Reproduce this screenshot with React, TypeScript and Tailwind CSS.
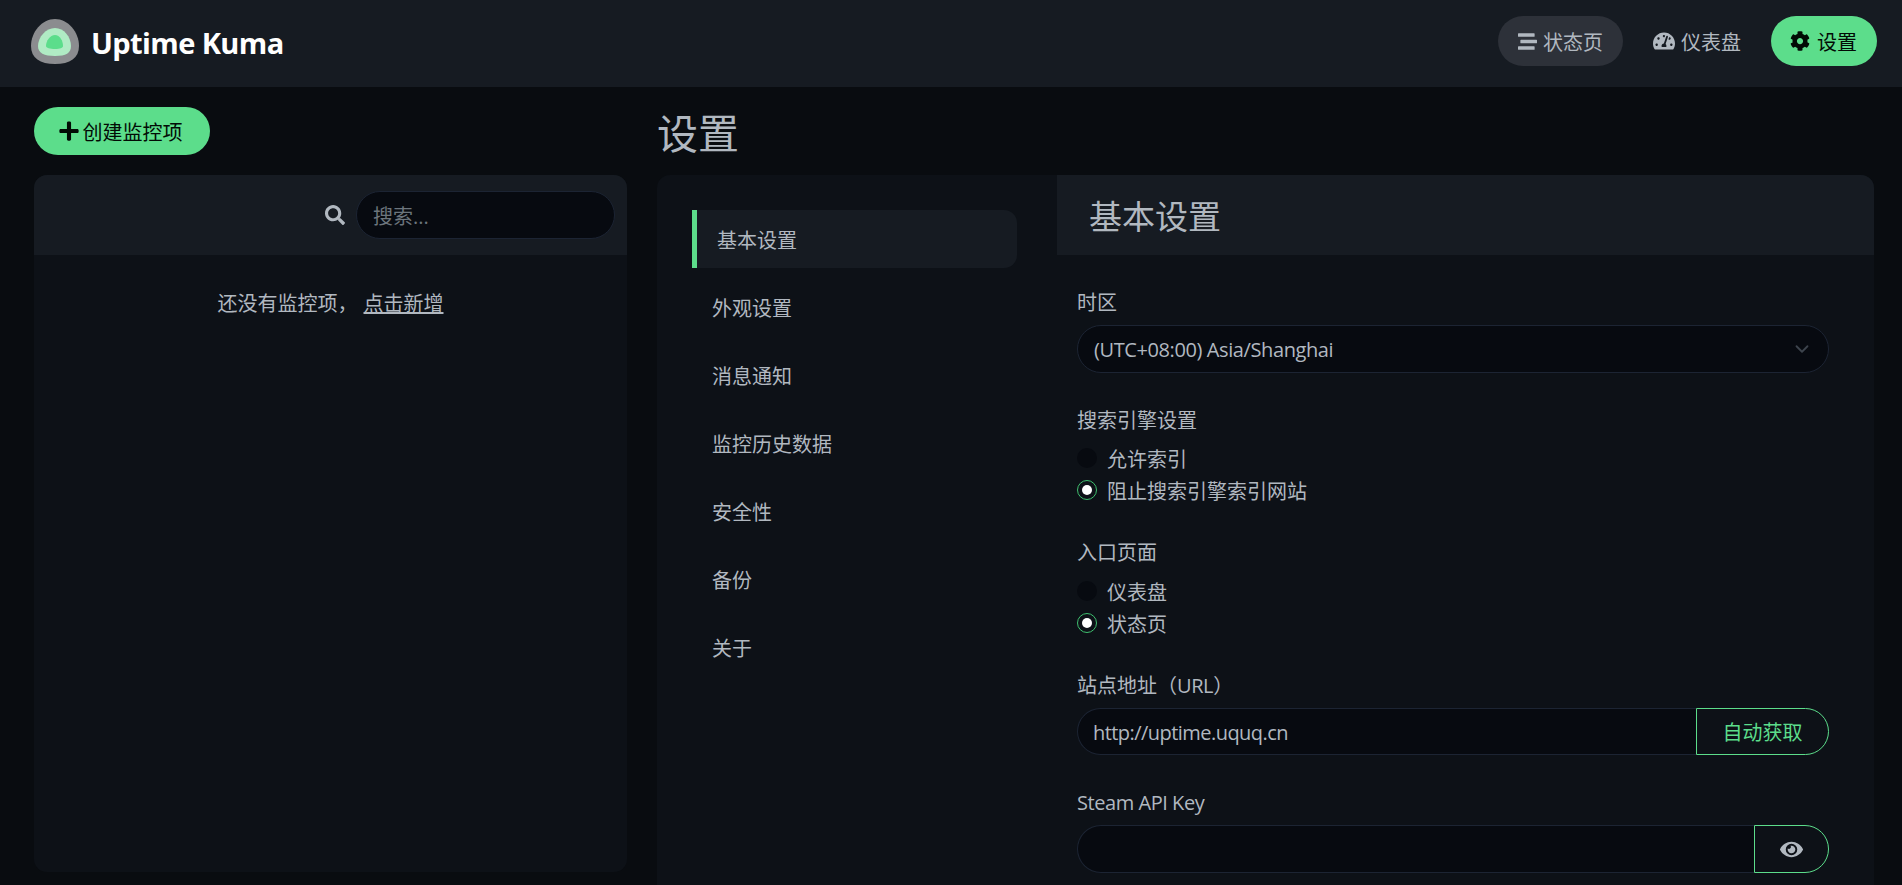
import React from "react";
import { FaCog, FaEye, FaPlus, FaSearch, FaStream, FaTachometerAlt } from "react-icons/fa";
import { ChevronDown } from "lucide-react";

const font = "font-['Open_Sans','Noto_Sans_CJK_SC',sans-serif]";

const menuItems = ["外观设置", "消息通知", "监控历史数据", "安全性", "备份", "关于"];

const Logo = () => (
  <svg width="48" height="45" viewBox="0 0 48 45">
    <path
      d="M24 0C37 0 48 13 48 27C48 39 39 45 24 45C9 45 0 39 0 27C0 13 11 0 24 0Z"
      fill="#8b8c8f"
    />
    <path
      d="M24 9C33 9 40 18 40 27C40 34 35 37 24 37C13 37 7 34 7 27C7 18 15 9 24 9Z"
      fill="#b0ebc4"
    />
    <path
      d="M24 16C29 16 32 22 32 27C32 29 29 30 24 30C19 30 15 29 15 27C15 22 19 16 24 16Z"
      fill="#5cdd8b"
    />
  </svg>
);

const Radio = ({ label, checked }: { label: string; checked?: boolean }) => (
  <div className="flex h-[32px] items-center gap-[10px]">
    {checked ? (
      <span className="flex h-[20px] w-[20px] items-center justify-center rounded-full border border-[#3fbf6f] bg-[#0d1117]">
        <span className="h-[10px] w-[10px] rounded-full bg-white" />
      </span>
    ) : (
      <span className="h-[20px] w-[20px] rounded-full bg-[#070a10]" />
    )}
    <span className="pt-[4px]">{label}</span>
  </div>
);

const Label = ({ children }: { children: React.ReactNode }) => (
  <div className="flex h-[30px] items-center pt-[4px]">{children}</div>
);

const App = () => {
  return (
    <div className={`${font} flex h-screen flex-col overflow-hidden bg-[#090c10] text-[20px] text-[#b1b8c0]`}>
      <header className="flex h-[87px] shrink-0 items-center bg-[#161b22] pb-[5px] pl-[31px] pr-[25px]">
        <Logo />
        <span className="ml-[12px] pt-[3px] text-[29px] font-bold tracking-[-0.6px] text-white">Uptime Kuma</span>
        <nav className="ml-auto flex items-center gap-[10px]">
          <a className="flex h-[50px] items-center gap-[6px] rounded-full bg-[#2d3139] px-[20px]">
            <FaStream className="text-[19px]" />
            <span className="pt-[4px]">状态页</span>
          </a>
          <a className="flex h-[50px] items-center gap-[6px] rounded-full px-[20px]">
            <FaTachometerAlt className="text-[22px]" />
            <span className="pt-[4px]">仪表盘</span>
          </a>
          <a className="flex h-[50px] items-center gap-[7px] rounded-full bg-[#5cdd8b] pl-[19px] pr-[20px] text-[#020b05]">
            <FaCog className="text-[20px]" />
            <span className="pt-[4px]">设置</span>
          </a>
        </nav>
      </header>

      <main className="flex min-h-0 flex-1 gap-[30px] pl-[34px] pr-[28px]">
        <div className="w-[593px] shrink-0 pt-[20px]">
          <button className="flex h-[48px] w-[176px] items-center justify-center gap-[3px] rounded-full bg-[#5cdd8b] pr-[4px] text-[#020b05]">
            <FaPlus className="text-[22px]" />
            <span className="pt-[4px]">创建监控项</span>
          </button>
          <div className="mt-[20px] h-[697px] overflow-hidden rounded-[13px] bg-[#0d1117]">
            <div className="flex h-[80px] items-center justify-end gap-[11px] bg-[#161b22] pr-[12px]">
              <FaSearch className="text-[#b1b8c0]" />
              <div className="flex h-[48px] w-[259px] items-center rounded-full border border-[#1c2433] bg-[#070a10] px-[16px] pt-[4px] text-[#6c757d]">
                搜索...
              </div>
            </div>
            <div className="mt-[34px] text-center leading-[30px]">
              还没有监控项，
              <a className="ml-[6px] underline">点击新增</a>
            </div>
          </div>
        </div>

        <div className="min-w-0 flex-1">
          <h1 className="flex h-[88px] items-center pt-[4px] text-[41px] leading-none">设置</h1>
          <div className="flex h-[800px] overflow-hidden rounded-[13px] bg-[#0d1117]">
            <div className="w-[400px] shrink-0 pl-[35px] pr-[40px] pt-[35px]">
              <div className="flex h-[58px] items-center rounded-r-[13px] border-l-[5px] border-[#5cdd8b] bg-[#161b22] pl-[20px] pt-[4px]">
                基本设置
              </div>
              {menuItems.map((item) => (
                <div key={item} className="mt-[10px] flex h-[58px] items-center pl-[20px] pt-[4px]">
                  {item}
                </div>
              ))}
            </div>

            <div className="min-w-0 flex-1">
              <div className="flex h-[80px] items-center bg-[#161b22] pl-[32px] pt-[4px] text-[33px]">基本设置</div>
              <div className="pl-[20px] pr-[45px] pt-[31px]">
                <Label>时区</Label>
                <div className="mt-[9px] flex h-[48px] items-center justify-between rounded-full border border-[#1c2433] bg-[#070a10] pl-[16px] pr-[15px]">
                  <span className="pt-[2px] tracking-[-0.4px]">(UTC+08:00) Asia/Shanghai</span>
                  <ChevronDown className="h-[22px] w-[22px] text-[#3d444d]" />
                </div>

                <div className="mt-[31px]">
                  <Label>搜索引擎设置</Label>
                </div>
                <div className="mt-[8px]">
                  <Radio label="允许索引" />
                  <Radio label="阻止搜索引擎索引网站" checked />
                </div>

                <div className="mt-[30px]">
                  <Label>入口页面</Label>
                </div>
                <div className="mt-[9px]">
                  <Radio label="仪表盘" />
                  <Radio label="状态页" checked />
                </div>

                <div className="mt-[30px]">
                  <Label>
                    站点地址（<span className="tracking-[-0.4px]">URL</span>）
                  </Label>
                </div>
                <div className="mt-[9px] flex h-[47px]">
                  <div className="flex min-w-0 flex-1 items-center rounded-l-full border border-r-0 border-[#1c2433] bg-[#070a10] pl-[15px] pt-[2px] tracking-[-0.55px]">
                    http://uptime.uquq.cn
                  </div>
                  <button className="w-[133px] rounded-r-full border border-[#5cdd8b] pt-[2px] text-[#5cdd8b]">自动获取</button>
                </div>

                <div className="mt-[31px]">
                  <Label>
                    <span className="tracking-[-0.45px]">Steam API Key</span>
                  </Label>
                </div>
                <div className="mt-[9px] flex h-[48px]">
                  <div className="min-w-0 flex-1 rounded-l-full border border-r-0 border-[#1c2433] bg-[#070a10]" />
                  <button className="flex w-[75px] items-center justify-center rounded-r-full border border-[#5cdd8b]">
                    <FaEye className="text-[23px] text-[#b1b8c0]" />
                  </button>
                </div>
              </div>
            </div>
          </div>
        </div>
      </main>
    </div>
  );
};

export default App;
